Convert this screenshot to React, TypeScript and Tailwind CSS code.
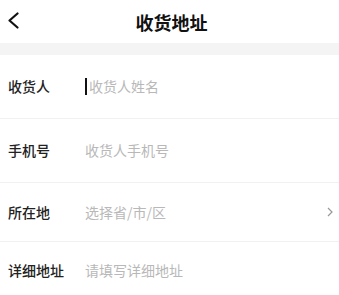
import React from "react";

const rows = [
  { label: "收货人", placeholder: "收货人姓名", h: "h-[64px]", cursor: true },
  { label: "手机号", placeholder: "收货人手机号", h: "h-[64px]" },
  { label: "所在地", placeholder: "选择省/市/区", h: "h-[59px]", arrow: true },
  { label: "详细地址", placeholder: "请填写详细地址", h: "h-[56px]" },
];

export default function App() {
  return (
    <div
      className="w-[339px] h-[295px] overflow-hidden bg-white"
      style={{ fontFamily: '"Noto Sans CJK SC", "Noto Sans", sans-serif' }}
    >
      {/* Header */}
      <header className="relative h-[43px] flex items-center justify-center">
        <svg
          className="absolute left-[7px] top-[12px]"
          width="13"
          height="17"
          viewBox="0 0 13 17"
          fill="none"
          stroke="#111"
          strokeWidth="2.2"
          strokeLinecap="round"
          strokeLinejoin="round"
        >
          <path d="M10.5 1.5 L2.5 8.5 L10.5 15.5" />
        </svg>
        <h1 className="text-[18px] font-bold text-[#111] leading-none ml-[4px]">收货地址</h1>
      </header>
      <div className="h-[12px] bg-[#f4f4f4]" />

      {/* Form */}
      <div>
        {rows.map((r, i) => (
          <div
            key={i}
            className={`${r.h} flex items-center px-[8px] ${
              i < rows.length - 1 ? "border-b border-[#f1f1f1]" : ""
            }`}
          >
            <span className="w-[77px] text-[14px] font-medium text-[#222] shrink-0">{r.label}</span>
            <div className="flex-1 flex items-center">
              {r.cursor && <span className="w-[2px] h-[17px] bg-[#111] mr-[2px]" />}
              <span className="text-[14px] text-[#b8b8b8]">{r.placeholder}</span>
            </div>
            {r.arrow && (
              <svg
                width="6"
                height="10"
                viewBox="0 0 6 10"
                fill="none"
                stroke="#999"
                strokeWidth="1.2"
                className="mr-[-2px]"
              >
                <path d="M1 1 L5 5 L1 9" />
              </svg>
            )}
          </div>
        ))}
      </div>
    </div>
  );
}
